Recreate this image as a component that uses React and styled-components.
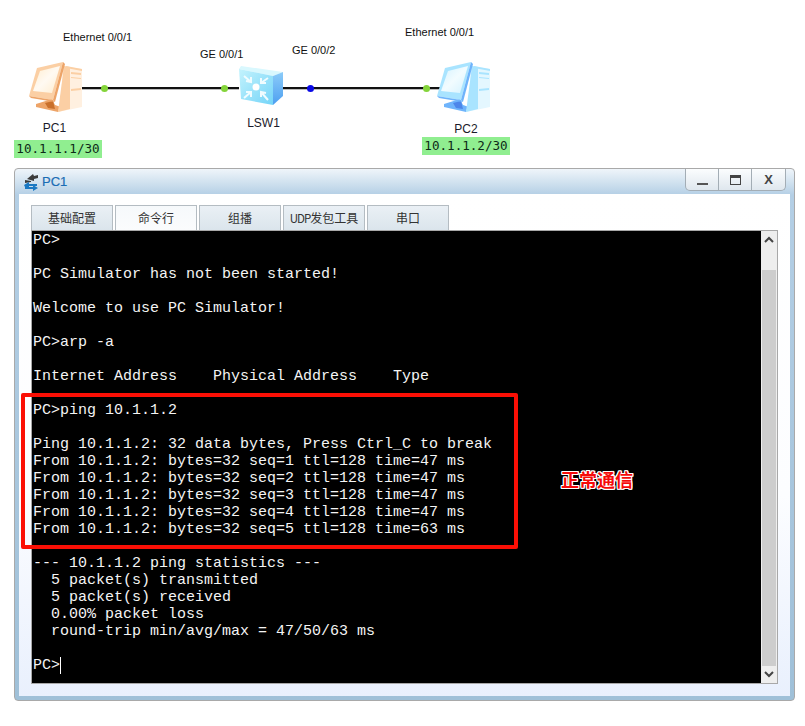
import React from "react";
import styled, { createGlobalStyle } from "styled-components";

const GlobalStyle = createGlobalStyle`
  html, body {
    margin: 0;
    padding: 0;
    background: #fff;
  }
`;

const lines = [
  "PC>",
  "",
  "PC Simulator has not been started!",
  "",
  "Welcome to use PC Simulator!",
  "",
  "PC>arp -a",
  "",
  "Internet Address    Physical Address    Type",
  "",
  "PC>ping 10.1.1.2",
  "",
  "Ping 10.1.1.2: 32 data bytes, Press Ctrl_C to break",
  "From 10.1.1.2: bytes=32 seq=1 ttl=128 time=47 ms",
  "From 10.1.1.2: bytes=32 seq=2 ttl=128 time=47 ms",
  "From 10.1.1.2: bytes=32 seq=3 ttl=128 time=47 ms",
  "From 10.1.1.2: bytes=32 seq=4 ttl=128 time=47 ms",
  "From 10.1.1.2: bytes=32 seq=5 ttl=128 time=63 ms",
  "",
  "--- 10.1.1.2 ping statistics ---",
  "  5 packet(s) transmitted",
  "  5 packet(s) received",
  "  0.00% packet loss",
  "  round-trip min/avg/max = 47/50/63 ms",
  "",
];

const orange = { hi: "#fffaf2", mid: "#fbcfa4", dark: "#eda468", deep: "#c9702c", screen: "#ffeccd", tower: "#fff0e0" };
const blue = { hi: "#f2fcff", mid: "#a9e4ff", dark: "#6fb4fb", deep: "#4d86ea", screen: "#d3f2ff", tower: "#e4f7ff" };

const PcIcon = ({ c, id }) => (
  <svg width="56" height="52" viewBox="0 0 56 52">
    <defs>
      <linearGradient id={id} x1="0" y1="0" x2="1" y2="1">
        <stop offset="0" stopColor={c.screen} />
        <stop offset="0.5" stopColor={c.hi} />
        <stop offset="1" stopColor={c.screen} />
      </linearGradient>
    </defs>
    <path d="M8 43 L24 38 L27 44 L36 47 L30 51 L8 46 Z" fill={c.dark} />
    <path d="M17 42 L25 40 L27 48 L20 47 Z" fill={c.deep} />
    <path d="M35 5 L54 8 L54 46 L30 51 L33 40 Z" fill={c.tower} />
    <path d="M38 5 L54 8 L54 10 L38 7 Z" fill={c.mid} />
    <path d="M43 11 L53 12 L53 14 L43 13 Z M43 16 L53 17 L53 18 L43 17 Z M43 28 L53 27 L53 29 L43 30 Z" fill={c.mid} />
    <path d="M36 5 L42 6 L42 48 L30 51 Z" fill={c.mid} />
    <path d="M9 7 L35 1 L25 39 L1 35 Z" fill={c.mid} />
    <path d="M35 1 L37 3 L27 41 L25 39 Z" fill={c.dark} />
    <path d="M12 10 L32 5 L24 32 L5 30 Z" fill={`url(#${id})`} />
    <path d="M1 35 L25 39 L27 41 L3 37 Z" fill={c.dark} />
  </svg>
);

const SwitchIcon = () => (
  <svg width="44" height="40" viewBox="0 0 44 40">
    <defs>
      <linearGradient id="swFront" x1="0" y1="0" x2="1" y2="1">
        <stop offset="0" stopColor="#c4f3fd" />
        <stop offset="1" stopColor="#74d4f8" />
      </linearGradient>
      <linearGradient id="swSide" x1="0" y1="0" x2="0" y2="1">
        <stop offset="0" stopColor="#8cccf9" />
        <stop offset="1" stopColor="#4d9ff0" />
      </linearGradient>
    </defs>
    <path d="M0 3 L2 0 L44 6 L34 10 Z" fill="#d9f8fe" />
    <path d="M34 10 L44 6 L44 30 L34 39 Z" fill="url(#swSide)" />
    <path d="M0 3 L34 10 L34 39 L2 33 Z" fill="url(#swFront)" />
    <circle cx="17" cy="21" r="3.5" fill="#fff" />
    <g stroke="#f0fcff" strokeWidth="2" fill="none">
      <path d="M5 10 L12 16 M12 11 L12 16 L7 15" />
      <path d="M29 12 L22 17 M22 12 L22 17 L27 17" />
      <path d="M12 26 L5 32 M7 26 L12 26 L12 31" />
      <path d="M22 26 L29 34 M27 27 L22 26 L22 31" />
    </g>
  </svg>
);

const WindowIcon = () => (
  <svg width="16" height="17" viewBox="0 0 16 17">
    <path d="M10 0 L11 2 L15 1 L15 4 L11 5 L11 7 L4 5 Z M2 6 L8 7 L8 8 L2 9 Z" fill="#3c3c3c" />
    <path d="M1 11 L6 8 L6 10 L14 10 L14 12 L6 12 L6 13 L10 13 L10 11 L15 14 L10 17 L10 15 L2 15 L2 13 Z" fill="#1a78c2" />
  </svg>
);

export default function App() {
  return (
    <Page>
      <GlobalStyle />
      <Topology>
        <Link $left={82} $width={157} $padLeft={19} $padRight={11}>
          <Port />
          <Port />
        </Link>
        <Link $left={283} $width={157} $padLeft={24} $padRight={10}>
          <Port $blue />
          <Port />
        </Link>
        <Node $x={14} $y={61} $nameGap={8} $tagGap={4} $iconInset={4}>
          <PcIcon c={orange} id="pcA" />
          <DeviceName $insetRight={7}>PC1</DeviceName>
          <IpTag>10.1.1.1/30</IpTag>
        </Node>
        <Node $x={239} $y={66} $nameGap={10} $tagGap={0}>
          <SwitchIcon />
          <DeviceName $insetLeft={5}>LSW1</DeviceName>
        </Node>
        <Node $x={422} $y={61} $nameGap={9} $tagGap={0} $iconInset={4}>
          <PcIcon c={blue} id="pcB" />
          <DeviceName>PC2</DeviceName>
          <IpTag>10.1.1.2/30</IpTag>
        </Node>
        <PortLabel $x={63} $y={30}>Ethernet 0/0/1</PortLabel>
        <PortLabel $x={200} $y={47}>GE 0/0/1</PortLabel>
        <PortLabel $x={292} $y={43}>GE 0/0/2</PortLabel>
        <PortLabel $x={405} $y={25}>Ethernet 0/0/1</PortLabel>
      </Topology>

      <Window>
        <TitleBar>
          <Title>
            <WindowIcon />
            PC1
          </Title>
          <WindowButtons>
            <WindowButton>
              <MinGlyph />
            </WindowButton>
            <WindowButton>
              <MaxGlyph />
            </WindowButton>
            <WindowButton $last>X</WindowButton>
          </WindowButtons>
        </TitleBar>
        <Body>
          <TabRow>
            <Tab>基础配置</Tab>
            <Tab $active>命令行</Tab>
            <Tab>组播</Tab>
            <Tab><TabLatin>UDP</TabLatin>发包工具</Tab>
            <Tab>串口</Tab>
          </TabRow>
          <Console>
            <Screen>
              {lines.map((line, i) => (
                <Line key={i}>{line}</Line>
              ))}
              <Line>PC&gt;<Caret /></Line>
            </Screen>
            <ScrollBar>
              <ScrollButton>
                <svg width="10" height="7" viewBox="0 0 10 7">
                  <path d="M1 6 L5 2 L9 6" fill="none" stroke="#444" strokeWidth="2" />
                </svg>
              </ScrollButton>
              <ScrollGap />
              <ScrollThumb />
              <ScrollButton>
                <svg width="10" height="7" viewBox="0 0 10 7">
                  <path d="M1 1 L5 5 L9 1" fill="none" stroke="#444" strokeWidth="2" />
                </svg>
              </ScrollButton>
            </ScrollBar>
          </Console>
        </Body>
        <RedBox />
        <Note>正常通信</Note>
      </Window>
    </Page>
  );
}

const Page = styled.div`
  width: 805px;
  height: 726px;
  background: #fff;
  overflow: hidden;
`;

const Topology = styled.div`
  position: relative;
  height: 168px;
`;

const Link = styled.div`
  position: absolute;
  left: ${(p) => p.$left}px;
  top: 87px;
  box-sizing: border-box;
  width: ${(p) => p.$width}px;
  height: 2px;
  padding: 0 ${(p) => p.$padRight}px 0 ${(p) => p.$padLeft}px;
  display: flex;
  justify-content: space-between;
  align-items: center;
  background: #111;
  box-shadow: 0 1px 0 #bbb;
`;

const Port = styled.div`
  width: 7px;
  height: 7px;
  border-radius: 50%;
  background: ${(p) => (p.$blue ? "#0a0ae6" : "#84d43a")};
`;

const Node = styled.div`
  position: absolute;
  left: ${(p) => p.$x}px;
  top: ${(p) => p.$y}px;
  display: flex;
  flex-direction: column;
  align-items: center;

  & > svg {
    display: block;
    margin-right: ${(p) => p.$iconInset || 0}px;
    margin-bottom: ${(p) => p.$nameGap}px;
  }

  & > div + div {
    margin-top: ${(p) => p.$tagGap}px;
  }
`;

const PortLabel = styled.div`
  position: absolute;
  left: ${(p) => p.$x}px;
  top: ${(p) => p.$y}px;
  font: 11px/14px "Liberation Sans", sans-serif;
  color: #111;
  white-space: nowrap;
`;

const DeviceName = styled.div`
  padding: 0 ${(p) => p.$insetRight || 0}px 0 ${(p) => p.$insetLeft || 0}px;
  font: 12px/15px "Liberation Sans", sans-serif;
  color: #1a1a2a;
  white-space: nowrap;
`;

const IpTag = styled.div`
  width: 88px;
  height: 18px;
  background: #90ee90;
  font: 12.6px/17px "DejaVu Sans Mono", monospace;
  color: #0c2a18;
  text-align: center;
  white-space: nowrap;
`;

const Window = styled.div`
  position: relative;
  box-sizing: border-box;
  width: 781px;
  height: 533px;
  margin-left: 14px;
  display: flex;
  flex-direction: column;
  border: 1px solid #a9a9a9;
  border-radius: 4px;
  background: linear-gradient(to bottom, #eff5fa 0, #b4cfe5 26px, #9fc0d8 100%);
`;

const TitleBar = styled.div`
  height: 25px;
  display: flex;
  justify-content: space-between;
  align-items: flex-start;
  padding: 0 8px;
  flex-shrink: 0;
`;

const Title = styled.div`
  display: flex;
  align-items: center;
  gap: 3px;
  height: 26px;
  font: 13px/26px "Liberation Sans", sans-serif;
  color: #1b6db5;
  -webkit-text-stroke: 0.2px #1b6db5;
`;

const WindowButtons = styled.div`
  display: flex;
  height: 21px;
  border: 1px solid #a3adb5;
  border-top: 0;
  border-radius: 0 0 5px 5px;
  background: linear-gradient(to bottom, #fbfdfe, #dfe7ee);
`;

const WindowButton = styled.div`
  box-sizing: border-box;
  width: 33px;
  display: flex;
  align-items: center;
  justify-content: center;
  font: bold 13px/21px "Liberation Sans", sans-serif;
  color: #444;
  border-right: ${(p) => (p.$last ? "0" : "1px solid #a3adb5")};
`;

const MinGlyph = styled.div`
  width: 11px;
  height: 2px;
  margin-top: 8px;
  background: #555;
`;

const MaxGlyph = styled.div`
  box-sizing: border-box;
  width: 11px;
  height: 10px;
  border: 1px solid #444;
  border-top-width: 3px;
`;

const Body = styled.div`
  flex: 1;
  margin: 0 4px 4px 4px;
  padding: 11px 12px 12px 12px;
  display: flex;
  flex-direction: column;
  background: linear-gradient(to bottom, #fff 0, #fcfdff 60%, #e9f0fd 100%);
  min-height: 0;
`;

const TabRow = styled.div`
  display: flex;
  gap: 2px;
  height: 25px;
  flex-shrink: 0;
`;

const Tab = styled.div`
  box-sizing: border-box;
  width: 82px;
  height: 25px;
  border: 1px solid #b4bcc2;
  border-bottom: 0;
  background: ${(p) =>
    p.$active
      ? "linear-gradient(to bottom, #f6f9fb, #fbfcfd)"
      : "linear-gradient(to bottom, #eaf0f5, #dbe5ec)"};
  text-align: center;
  font: 12px/24px "Noto Sans CJK SC", sans-serif;
  color: #333;
  white-space: nowrap;
`;

const TabLatin = styled.span`
  letter-spacing: -1px;
  font-size: 11.5px;
`;

const Console = styled.div`
  flex: 1;
  display: flex;
  border: 1px solid #a8a8a8;
  background: #000;
  min-height: 0;
`;

const Screen = styled.div`
  flex: 1;
  padding: 1px 0 0 1px;
  overflow: hidden;
`;

const Line = styled.div`
  height: 17px;
  font: 15px/17px "Liberation Mono", monospace;
  color: #f4f4f4;
  white-space: pre;
`;

const Caret = styled.span`
  display: inline-block;
  width: 1px;
  height: 17px;
  background: #fff;
  vertical-align: top;
`;

const ScrollBar = styled.div`
  width: 16px;
  display: flex;
  flex-direction: column;
  background: #eee;
  flex-shrink: 0;
`;

const ScrollButton = styled.div`
  height: 17px;
  display: flex;
  align-items: center;
  justify-content: center;
  flex-shrink: 0;
`;

const ScrollGap = styled.div`
  height: 22px;
  flex-shrink: 0;
`;

const ScrollThumb = styled.div`
  flex: 1;
  background: #cdcdcd;
  margin: 0 1px;
`;

const RedBox = styled.div`
  position: absolute;
  left: 6px;
  top: 224px;
  box-sizing: border-box;
  width: 497px;
  height: 156px;
  border: 4px solid #fb0f05;
  border-radius: 2px;
`;

const Note = styled.div`
  position: absolute;
  left: 546px;
  top: 298px;
  font: bold 18px/24px "Noto Sans CJK SC", sans-serif;
  color: #f50a0a;
  white-space: nowrap;
  text-shadow: 1px 0 0 #fff, -1px 0 0 #fff, 0 1px 0 #fff, 0 -1px 0 #fff,
    1px 1px 0 #fff, -1px -1px 0 #fff, 1px -1px 0 #fff, -1px 1px 0 #fff;
`;
